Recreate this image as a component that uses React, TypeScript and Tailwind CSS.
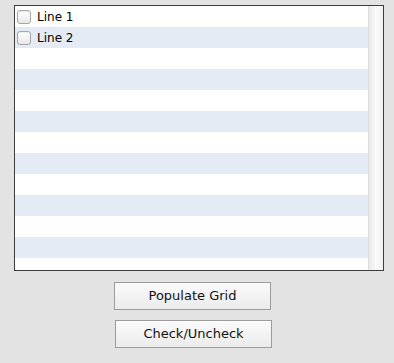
import { useState } from "react"

const lines = ["Line 1", "Line 2"]

export default function App() {
  const [checked, setChecked] = useState<boolean[]>([false, false])
  const rows = Array.from({ length: 13 })

  return (
    <div className="w-[394px] h-[363px] bg-[#e3e3e3] pt-[5px] font-['DejaVu_Sans',sans-serif] text-[12px] text-black">
      {/* GRID */}
      <div className="ml-[14px] w-[370px] h-[266px] border border-[#3d3d3d] bg-white flex overflow-hidden">
        <div className="flex-1 flex flex-col">
          {rows.map((_, i) => (
            <div
              key={i}
              className={`h-[21px] shrink-0 flex items-center ${i % 2 === 1 ? "bg-[#e4ebf5]" : "bg-white"}`}
            >
              {i < lines.length && (
                <label className="flex items-center">
                  <span
                    onClick={() =>
                      setChecked(checked.map((c, j) => (j === i ? !c : c)))
                    }
                    className="ml-[2px] w-[14px] h-[14px] rounded-[3px] border border-[#a5a5a5] bg-gradient-to-b from-white to-[#e8e8e8] shadow-[inset_0_1px_1px_rgba(0,0,0,0.08)] flex items-center justify-center text-[10px] leading-none"
                  >
                    {checked[i] ? "✓" : ""}
                  </span>
                  <span className="ml-[6px] leading-none">{lines[i]}</span>
                </label>
              )}
            </div>
          ))}
        </div>
        <div className="w-[15px] shrink-0 border-l border-[#dcdcdc] bg-gradient-to-r from-[#e8e8e8] via-[#fafafa] to-[#f2f2f2]" />
      </div>

      {/* BUTTONS */}
      <div className="ml-[114px] mt-[11px] flex flex-col gap-[10px] text-[13px]">
        <button className="w-[157px] h-[28px] border border-[#9c9c9c] bg-gradient-to-b from-[#fbfbfb] to-[#ebebeb] text-[#111]">
          Populate Grid
        </button>
        <button className="ml-[1px] w-[157px] h-[28px] border border-[#9c9c9c] bg-gradient-to-b from-[#fbfbfb] to-[#ebebeb] text-[#111]">
          Check/Uncheck
        </button>
      </div>
    </div>
  )
}
